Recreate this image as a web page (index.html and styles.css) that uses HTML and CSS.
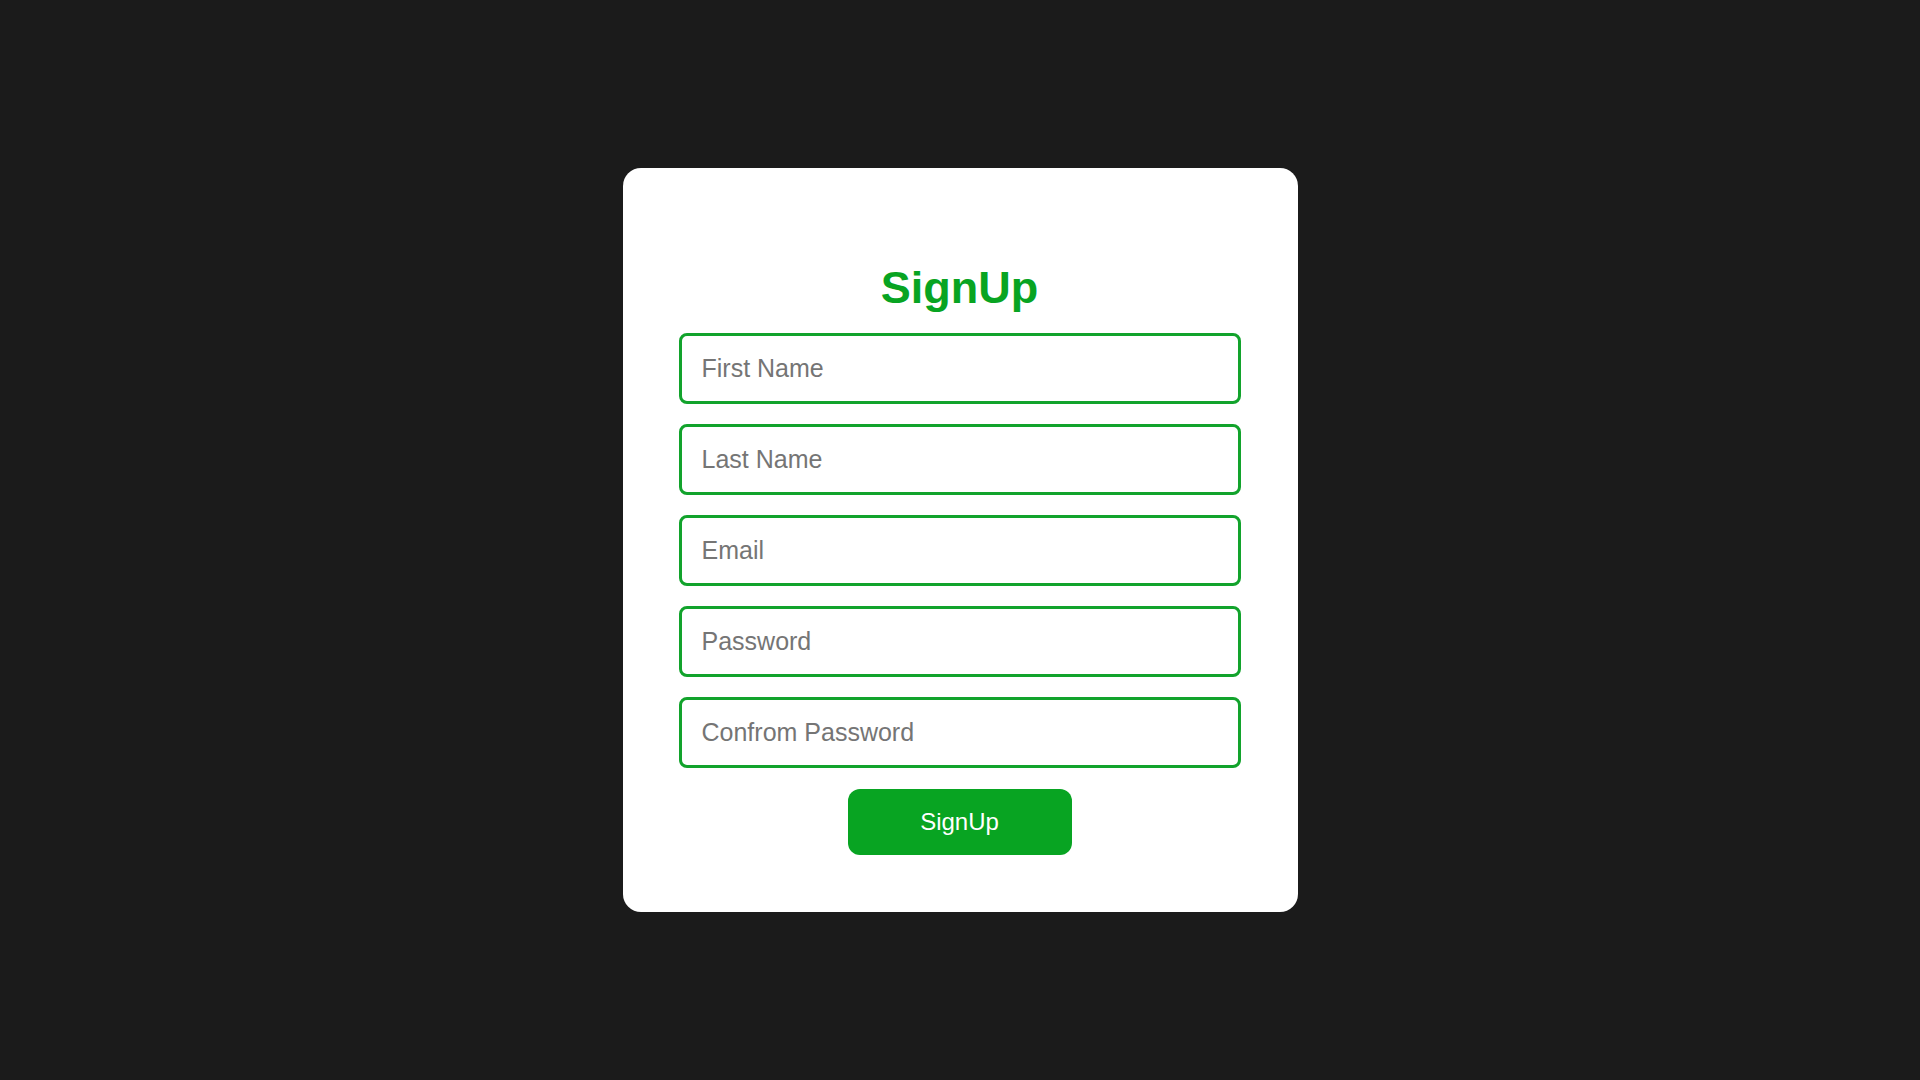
FILE: index.html
```html
<!DOCTYPE html>
<html lang="en">
<head>
<meta charset="utf-8">
<title>SignUp</title>
<link rel="stylesheet" href="styles.css">
</head>
<body>
<main class="page">
  <form class="card">
    <h1 class="title">SignUp</h1>
    <div class="fields">
      <input class="field" type="text" placeholder="First Name">
      <input class="field" type="text" placeholder="Last Name">
      <input class="field" type="email" placeholder="Email">
      <input class="field" type="password" placeholder="Password">
      <input class="field" type="password" placeholder="Confrom Password">
    </div>
    <button class="btn" type="button">SignUp</button>
  </form>
</main>
</body>
</html>
```
FILE: styles.css
```css
* { box-sizing: border-box; }
html, body { margin: 0; padding: 0; }
body {
  background: #1b1b1b;
  font-family: "Liberation Sans", Arial, sans-serif;
}
.page {
  height: 100vh;
  display: flex;
  align-items: center;
  justify-content: center;
}
.card {
  width: 675px;
  background: #ffffff;
  border-radius: 18px;
  padding: 95px 57px 57px 56px;
  display: flex;
  flex-direction: column;
  align-items: center;
}
.title {
  margin: 0 0 20px;
  font-size: 45px;
  line-height: 50px;
  font-weight: 700;
  color: #08a422;
}
.fields {
  width: 100%;
  display: flex;
  flex-direction: column;
  gap: 20px;
}
.field {
  width: 100%;
  height: 71px;
  border: 3px solid #12a32c;
  border-radius: 8px;
  padding: 0 20px;
  font-family: "Liberation Sans", Arial, sans-serif;
  font-size: 25px;
  color: #333;
  background: #fff;
  outline: none;
}
.field::placeholder { color: #757575; }
.btn {
  margin-top: 21px;
  width: 224px;
  height: 66px;
  border: none;
  border-radius: 12px;
  background: #08a422;
  color: #ffffff;
  font-family: "Liberation Sans", Arial, sans-serif;
  font-size: 24px;
  cursor: pointer;
}
```
